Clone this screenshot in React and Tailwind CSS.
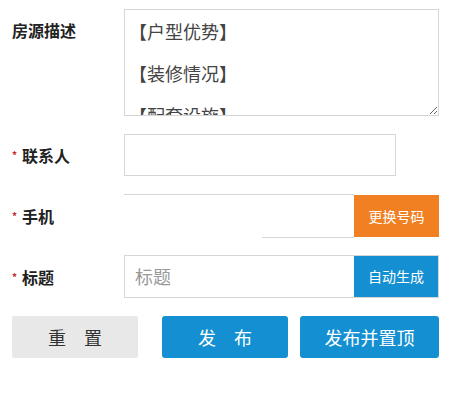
import React from 'react';

const font = { fontFamily: '"Noto Sans CJK SC", "Noto Sans", sans-serif' };

function Label({ text, required }) {
  return (
    <div className="w-[112px] shrink-0 flex items-center text-[16px] font-bold text-[#222]">
      {required && <span className="w-[10px] text-[10px] text-[#c0272d] leading-none">*</span>}
      {text}
    </div>
  );
}

export default function App() {
  return (
    <div className="w-[450px] h-[398px] bg-white pl-[12px] pt-[9px]" style={font}>
      {/* 房源描述 */}
      <div className="flex">
        <div className="w-[112px] shrink-0 pt-[9px] text-[16px] leading-[24px] font-bold text-[#222]">房源描述</div>
        <textarea
          readOnly
          className="w-[315px] h-[107px] border border-[#d6d6d6] pl-[4px] text-[18px] leading-[42px] text-[#444] overflow-hidden outline-none"
          style={font}
          defaultValue={'【户型优势】\n【装修情况】\n【配套设施】\n【小区环境】'}
        />
      </div>

      {/* 联系人 */}
      <div className="flex mt-[18px] h-[42px]">
        <Label text="联系人" required />
        <div className="w-[272px] h-[42px] border border-[#d6d6d6]" />
      </div>

      {/* 手机 */}
      <div className="flex mt-[18px] h-[44px]">
        <Label text="手机" required />
        <div className="w-[230px] h-[44px] flex flex-col border-t border-[#d6d6d6]">
          <div className="flex-1" />
          <div className="ml-[138px] border-b border-[#d6d6d6]" />
        </div>
        <div className="w-[85px] h-[42px] mt-[1px] bg-[#f08022] text-white text-[14px] flex items-center justify-center">
          更换号码
        </div>
      </div>

      {/* 标题 */}
      <div className="flex mt-[17px] h-[43px]">
        <Label text="标题" required />
        <div className="w-[315px] h-[43px] flex border border-[#d6d6d6]">
          <div className="flex-1 flex items-center pl-[10px] text-[18px] text-[#999]">标题</div>
          <div className="w-[84px] bg-[#1490d2] text-white text-[14px] flex items-center justify-center">
            自动生成
          </div>
        </div>
      </div>

      {/* 按钮 */}
      <div className="flex mt-[18px] h-[42px]">
        <div className="w-[126px] h-[42px] rounded-[2px] bg-[#e8e8e8] text-[#333] text-[18px] flex items-center justify-center">
          重　置
        </div>
        <div className="w-[126px] h-[42px] ml-[24px] rounded-[3px] bg-[#1490d2] text-white text-[18px] flex items-center justify-center">
          发　布
        </div>
        <div className="w-[139px] h-[42px] ml-[12px] rounded-[3px] bg-[#1490d2] text-white text-[18px] flex items-center justify-center">
          发布并置顶
        </div>
      </div>
    </div>
  );
}
